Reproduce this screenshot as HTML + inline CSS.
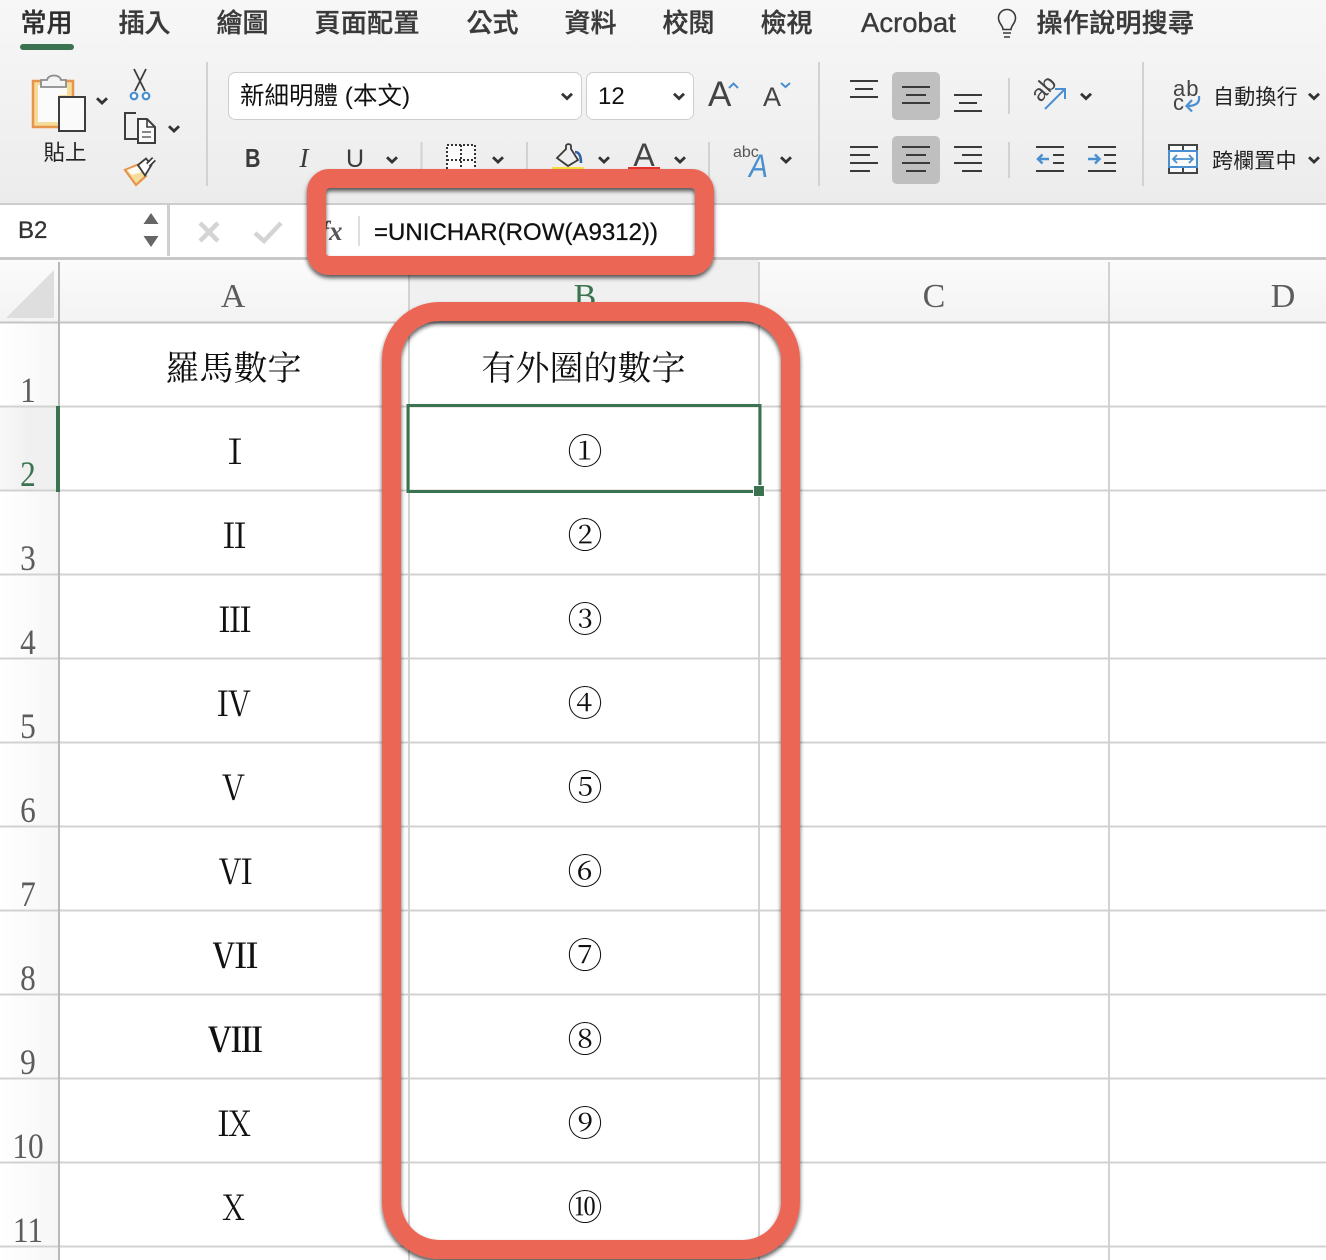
<!DOCTYPE html>
<html><head><meta charset="utf-8"><style>
html,body{margin:0;padding:0;background:#fff;width:1326px;height:1260px;overflow:hidden}
svg{display:block}
.m{font-family:"Liberation Sans","Noto Sans CJK TC",sans-serif;font-size:26px;font-weight:500;fill:#3a3a3a;stroke:#3a3a3a;stroke-width:.35px}
.t{font-family:"Liberation Sans","Noto Sans CJK TC",sans-serif;fill:#222}
.h{font-family:"Liberation Serif",serif;font-size:34px;fill:#5c5c5c;text-anchor:middle}
.r{font-family:"Liberation Serif",serif;font-size:36px;fill:#5c5c5c;text-anchor:middle}
.c{font-family:"Liberation Serif","Noto Serif CJK SC",serif;font-size:34px;fill:#111;text-anchor:middle}
.o{font-family:"Noto Serif CJK SC",serif;font-size:35px;fill:#111;text-anchor:middle}
</style></head><body>
<svg width="1326" height="1260" viewBox="0 0 1326 1260" xmlns="http://www.w3.org/2000/svg">
<defs>
<linearGradient id="rb" x1="0" y1="0" x2="0" y2="1"><stop offset="0" stop-color="#f7f7f7"/><stop offset="1" stop-color="#ececec"/></linearGradient>
<linearGradient id="ch" x1="0" y1="0" x2="0" y2="1"><stop offset="0" stop-color="#fbfbfb"/><stop offset="1" stop-color="#f3f3f3"/></linearGradient>
<linearGradient id="rh" x1="0" y1="0" x2="1" y2="0"><stop offset="0" stop-color="#ffffff"/><stop offset="1" stop-color="#f6f6f6"/></linearGradient>
<linearGradient id="rs" x1="0" y1="0" x2="1" y2="0"><stop offset="0" stop-color="#f8f8f8"/><stop offset=".5" stop-color="#f0f0f0"/></linearGradient>
<filter id="sd" filterUnits="userSpaceOnUse" x="0" y="0" width="1326" height="1260"><feDropShadow dx="0" dy="3" stdDeviation="2.200" flood-color="#000" flood-opacity=".65"/></filter>
<symbol id="cv" viewBox="0 0 12 8" overflow="visible"><path d="M1 1.200 6 6 11 1.200" fill="none" stroke="#333" stroke-width="2.800"/></symbol>
</defs>

<!-- ribbon -->
<rect width="1326" height="203" fill="url(#rb)"/>
<text class="m" x="20.500" y="32" style="fill:#2e2e2e">常用</text>
<rect x="20" y="44" width="54" height="6" rx="3" fill="#3b7350"/>
<text class="m" x="118.500" y="32">插入</text>
<text class="m" x="216.500" y="32">繪圖</text>
<text class="m" x="314.500" y="32" textLength="105">頁面配置</text>
<text class="m" x="466.500" y="32">公式</text>
<text class="m" x="564.500" y="32">資料</text>
<text class="m" x="662.500" y="32">校閱</text>
<text class="m" x="760.500" y="32">檢視</text>
<text class="m" x="861" y="32" style="font-size:27.500px">Acrobat</text>
<path d="M1003 33h8M1004 37h6M1003 29.500c0-4-4.500-6-4.500-11.500a8.500 8.500 0 0 1 17 0c0 5.500-4.500 7.500-4.500 11.500z" fill="none" stroke="#3a3a3a" stroke-width="1.600"/>
<text class="m" x="1036.500" y="32" textLength="157.500">操作說明搜尋</text>

<g fill="#d2d2d2">
<rect x="206" y="62" width="2" height="124"/><rect x="818" y="62" width="2" height="124"/><rect x="1142" y="62" width="2" height="124"/>
<rect x="420.500" y="142" width="2" height="36"/><rect x="526" y="142" width="2" height="36"/><rect x="708" y="142" width="2" height="36"/>
<rect x="1008" y="78" width="2" height="36"/><rect x="1008" y="142" width="2" height="36"/>
</g>

<!-- paste -->
<rect x="33" y="81" width="40" height="46" fill="#f6dc9a" stroke="#e5964c" stroke-width="2.500"/>
<path d="M38 85h29v10H59v27H38z" fill="#fbfbfb"/>
<path d="M41 87v-7h6c1-6 13-6 14 0h5v7z" fill="#f4f4f4" stroke="#8c8c8c" stroke-width="1.800"/>
<rect x="59" y="97" width="26" height="34" fill="#fafafa" stroke="#3d3d3d" stroke-width="2"/>
<use href="#cv" x="96" y="97" width="12" height="8"/>
<text class="t" x="65" y="160" text-anchor="middle" font-size="21.500">貼上</text>
<!-- scissors -->
<path d="M134 69l11 22M146 69l-11 22" stroke="#3d3d3d" stroke-width="1.800" fill="none"/>
<circle cx="134" cy="96" r="3.300" fill="#fff" stroke="#4a90d0" stroke-width="2.200"/>
<circle cx="146" cy="96" r="3.300" fill="#fff" stroke="#4a90d0" stroke-width="2.200"/>
<!-- copy -->
<path d="M136 113h-11v26h12" fill="none" stroke="#3d3d3d" stroke-width="2"/>
<path d="M138 119h9l8 8v16h-17z" fill="#fafafa" stroke="#3d3d3d" stroke-width="2"/>
<path d="M147 119v8h8" fill="none" stroke="#3d3d3d" stroke-width="1.600"/>
<path d="M142 132h9M142 137h9" stroke="#777" stroke-width="1.800"/>
<use href="#cv" x="168" y="125" width="12" height="8"/>
<!-- brush -->
<path d="M125 170l12-5 9 11-10 9z" fill="#f6dc9a" stroke="#e5964c" stroke-width="2.200"/>
<path d="M127 170l10-4 5 6-10 3z" fill="#fdfaf2"/>
<path d="M138 165l8-6.500 5.500 6.500-6.500 10.500z" fill="#fff" stroke="#3d3d3d" stroke-width="1.800"/>
<path d="M148 165l6-6" stroke="#3d3d3d" stroke-width="5.500" fill="none"/>
<path d="M148 165l6-6" stroke="#fff" stroke-width="2" fill="none"/>

<!-- font boxes -->
<rect x="228.500" y="72.500" width="353" height="47" rx="7" fill="#fff" stroke="#cdcdcd"/>
<rect x="586.500" y="72.500" width="107" height="47" rx="7" fill="#fff" stroke="#cdcdcd"/>
<text class="t" x="240" y="104" font-size="24.500" style="fill:#111">新細明體 (本文)</text>
<use href="#cv" x="561" y="92.500" width="12" height="8"/>
<text class="t" x="598" y="104" font-size="24" style="fill:#111">12</text>
<use href="#cv" x="673" y="92.500" width="12" height="8"/>
<text class="t" x="708" y="106" font-size="35" style="fill:#444">A</text>
<path d="M729 88l4.500-4.500 4.500 4.500" fill="none" stroke="#4a90d0" stroke-width="2"/>
<text class="t" x="763" y="106" font-size="27" style="fill:#444">A</text>
<path d="M781 83l4.500 4 4.500-4" fill="none" stroke="#4a90d0" stroke-width="2"/>

<!-- B I U -->
<text x="245" y="167" textLength="15.500" lengthAdjust="spacingAndGlyphs" font-family="Liberation Sans" font-weight="700" font-size="26" fill="#3a3a3a">B</text>
<text x="304" y="167" text-anchor="middle" font-family="Liberation Serif" font-style="italic" font-size="27" fill="#3a3a3a">I</text>
<text x="355" y="167" text-anchor="middle" font-family="Liberation Sans" font-size="25" fill="#3a3a3a">U</text>
<use href="#cv" x="386" y="156" width="12" height="8"/>
<path d="M447 145h28v30h-28zM461 145v30M447 160h28" fill="#fbfbfb" stroke="#333" stroke-width="2" stroke-dasharray="2 2"/>
<use href="#cv" x="492" y="156" width="12" height="8"/>
<path d="M557 158l9-9v-3c0-2.500 5-2.500 5 0v3l7 11-10 6z" fill="none" stroke="#3a3a3a" stroke-width="1.800"/>
<path d="M575 152c4 0 6 4 6 11" fill="none" stroke="#2f62a8" stroke-width="2.600"/>
<rect x="552" y="167" width="32" height="3" fill="#f7e23c"/>
<use href="#cv" x="598" y="156" width="12" height="8"/>
<text class="t" x="644" y="166" text-anchor="middle" font-size="32" style="fill:#444">A</text>
<rect x="628" y="167" width="32" height="3" fill="#e8352c"/>
<use href="#cv" x="674" y="156" width="12" height="8"/>
<text x="733" y="157" font-family="Liberation Sans" font-size="16" fill="#555">abc</text>
<text x="749" y="177" textLength="19" lengthAdjust="spacingAndGlyphs" font-family="Liberation Sans" font-style="italic" font-size="32" fill="#4a90d0">A</text>
<use href="#cv" x="780" y="156" width="12" height="8"/>

<!-- alignment -->
<rect x="892" y="72" width="48" height="48" rx="5" fill="#bfbfbf"/>
<rect x="892" y="136" width="48" height="48" rx="5" fill="#bfbfbf"/>
<g stroke="#3a3a3a" stroke-width="2" fill="none">
<path d="M850 81h28M855 89h18M850 97h28"/>
<path d="M902 87h28M906 95h20M902 103h28"/>
<path d="M954 95h28M959 103h18M954 111h28"/>
<path d="M850 147h28M850 155h20M850 163h28M850 171h20"/>
<path d="M902 147h28M906 155h20M902 163h28M906 171h20"/>
<path d="M954 147h28M962 155h20M954 163h28M962 171h20"/>
<path d="M1036 147h28M1053 155h11M1053 163h11M1036 171h28"/>
<path d="M1088 147h28M1104 155h12M1104 163h12M1088 171h28"/>
</g>
<text x="0" y="0" transform="translate(1040.500,103) rotate(-48)" font-family="Liberation Sans" font-size="23" fill="#444">ab</text>
<path d="M1045 109l20-20M1055 89h10v10" fill="none" stroke="#4a90d0" stroke-width="2"/>
<use href="#cv" x="1080" y="92.500" width="12" height="8"/>
<path d="M1049 159h-11M1042.500 154.500l-4.500 4.500 4.500 4.500" fill="none" stroke="#4a90d0" stroke-width="2.500"/>
<path d="M1088 159h11M1095 154.500l4.500 4.500-4.500 4.500" fill="none" stroke="#4a90d0" stroke-width="2.500"/>

<!-- wrap -->
<text x="1173" y="96" font-family="Liberation Sans" font-size="22" fill="#444" letter-spacing="1">ab</text>
<text x="1173" y="110" font-family="Liberation Sans" font-size="22" fill="#444">c</text>
<path d="M1199 96c1 7-3 10-12 10M1192 100l-5.500 6 5.500 5.500" fill="none" stroke="#4a90d0" stroke-width="2.200"/>
<text class="t" x="1213" y="104" font-size="21" letter-spacing=".2">自動換行</text>
<use href="#cv" x="1308" y="92.500" width="12" height="8"/>
<rect x="1169" y="145" width="28" height="28" fill="#fbfbfb" stroke="#444" stroke-width="2"/>
<path d="M1183 145v6M1183 167v6" stroke="#444" stroke-width="2"/>
<rect x="1169" y="151" width="28" height="16" fill="#fbfbfb" stroke="#4a90d0" stroke-width="2"/>
<path d="M1173 159h20M1177 155l-4 4 4 4M1189 155l4 4-4 4" fill="none" stroke="#4a90d0" stroke-width="1.800"/>
<text class="t" x="1212" y="168" font-size="21" letter-spacing=".2">跨欄置中</text>
<use href="#cv" x="1308" y="156" width="12" height="8"/>

<!-- formula bar -->
<rect x="0" y="203" width="1326" height="2" fill="#cdcdcd"/>
<rect x="0" y="205" width="1326" height="52" fill="#fff"/>
<rect x="167" y="205" width="3" height="51" fill="#cfcfcf"/>
<text x="18" y="238" font-family="Liberation Sans" font-size="24" fill="#333" stroke="#333" stroke-width=".3">B2</text>
<path d="M151 213l7.500 11h-15zM151 247l-7.500-11h15z" fill="#666"/>
<path d="M200 223l18 18M218 223l-18 18" stroke="#d4d4d4" stroke-width="4.500" fill="none"/>
<path d="M255 233l9 8 17-18" stroke="#d4d4d4" stroke-width="4.500" fill="none"/>
<text x="320" y="240" font-family="Liberation Serif" font-style="italic" font-weight="700" font-size="27" fill="#555">fx</text>
<rect x="358" y="216" width="2" height="30" fill="#dedede"/>
<text x="374" y="240" font-family="Liberation Sans" font-size="24" fill="#111" stroke="#111" stroke-width=".3" textLength="284">=UNICHAR(ROW(A9312))</text>
<rect x="0" y="257" width="1326" height="3" fill="#c8c8c8"/>

<!-- column header -->
<rect x="0" y="260" width="1326" height="62" fill="url(#ch)"/>
<rect x="409" y="260" width="350" height="62" fill="#f0f0f0"/>
<path d="M6 318 54 270v48z" fill="#dedede"/>
<text class="h" x="233" y="307">A</text>
<text class="h" x="585" y="307" style="fill:#3b7350">B</text>
<text class="h" x="934" y="307">C</text>
<text class="h" x="1283" y="307">D</text>

<!-- row header bg -->
<rect x="0" y="323" width="58" height="937" fill="url(#rh)"/>
<rect x="0" y="407" width="58" height="84" fill="url(#rs)"/>

<!-- grid -->
<g fill="#d2d2d2">
<rect x="0" y="405.500" width="1326" height="2"/><rect x="0" y="489.500" width="1326" height="2"/>
<rect x="0" y="573.500" width="1326" height="2"/><rect x="0" y="657.500" width="1326" height="2"/>
<rect x="0" y="741.500" width="1326" height="2"/><rect x="0" y="825.500" width="1326" height="2"/>
<rect x="0" y="909.500" width="1326" height="2"/><rect x="0" y="993.500" width="1326" height="2"/>
<rect x="0" y="1077.500" width="1326" height="2"/><rect x="0" y="1161.500" width="1326" height="2"/>
<rect x="0" y="1245.500" width="1326" height="2"/>
<rect x="408" y="262" width="2" height="998"/><rect x="758" y="262" width="2" height="998"/><rect x="1108" y="262" width="2" height="998"/>
</g>
<rect x="0" y="321.500" width="1326" height="2" fill="#c4c4c4"/>
<rect x="58" y="262" width="2" height="998" fill="#b8b8b8"/>
<rect x="56" y="406" width="4" height="86" fill="#3b7350"/>

<!-- row numbers -->
<g transform="translate(28,0) scale(.87,1)">
<text class="r" x="0" y="402">1</text>
<text class="r" x="0" y="486" style="fill:#3b7350">2</text>
<text class="r" x="0" y="570">3</text>
<text class="r" x="0" y="654">4</text>
<text class="r" x="0" y="738">5</text>
<text class="r" x="0" y="822">6</text>
<text class="r" x="0" y="906">7</text>
<text class="r" x="0" y="990">8</text>
<text class="r" x="0" y="1074">9</text>
<text class="r" x="0" y="1158">10</text>
<text class="r" x="0" y="1242">11</text>
</g>

<!-- cells -->
<text class="c" x="233.500" y="380">羅馬數字</text>
<text class="c" x="583.500" y="380">有外圈的數字</text>
<text class="c" x="235" y="464">Ⅰ</text>
<text class="c" x="234.500" y="548">Ⅱ</text>
<text class="c" x="235" y="632">Ⅲ</text>
<text class="c" x="234" y="716">Ⅳ</text>
<text class="c" x="233.500" y="800">Ⅴ</text>
<text class="c" x="235.500" y="884">Ⅵ</text>
<text class="c" x="235" y="968" textLength="45" lengthAdjust="spacingAndGlyphs">Ⅶ</text>
<text class="c" x="235.500" y="1052" textLength="54" lengthAdjust="spacingAndGlyphs">Ⅷ</text>
<text class="c" x="234.500" y="1136">Ⅸ</text>
<text class="c" x="233.500" y="1220">Ⅹ</text>
<text class="o" x="585" y="464">①</text>
<text class="o" x="585" y="548">②</text>
<text class="o" x="585" y="632">③</text>
<text class="o" x="585" y="716">④</text>
<text class="o" x="585" y="800">⑤</text>
<text class="o" x="585" y="884">⑥</text>
<text class="o" x="585" y="968">⑦</text>
<text class="o" x="585" y="1052">⑧</text>
<text class="o" x="585" y="1136">⑨</text>
<text class="o" x="585" y="1220">⑩</text>

<!-- selection -->
<rect x="408" y="405.500" width="352" height="86" fill="none" stroke="#3b7350" stroke-width="3"/>
<rect x="753" y="485" width="12" height="12" fill="#fff"/>
<rect x="754" y="486" width="10" height="10" fill="#3b7350"/>

<!-- callouts -->
<rect x="316.500" y="178.500" width="388" height="87" rx="13" fill="none" stroke="#ec6655" stroke-width="19" filter="url(#sd)"/>
<rect x="391.500" y="311.500" width="399" height="938" rx="48" fill="none" stroke="#ec6655" stroke-width="19" filter="url(#sd)"/>
</svg>
</body></html>
